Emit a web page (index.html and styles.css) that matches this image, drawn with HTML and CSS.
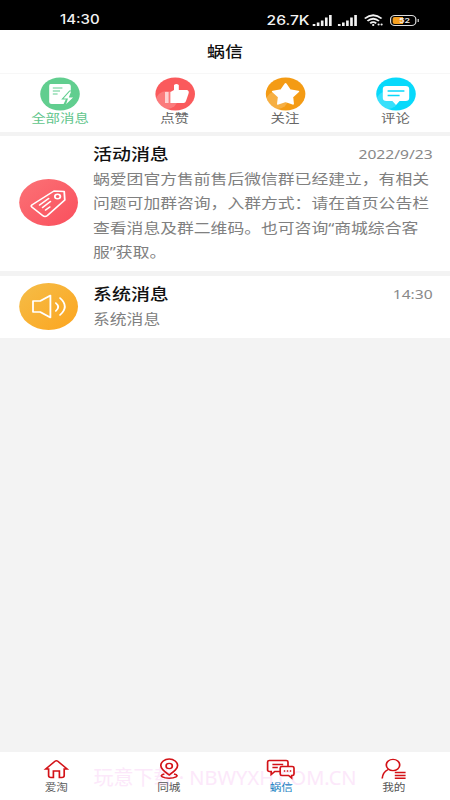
FILE: index.html
```html
<!DOCTYPE html>
<html lang="zh-CN">
<head>
<meta charset="utf-8">
<title>蜗信</title>
<link rel="stylesheet" href="styles.css">
</head>
<body>
<div class="screen">
  <header class="status">
    <span class="clock">14:30</span>
    <div class="indicators">
      <span>26.7K</span>
      <svg class="signal" viewBox="0 0 17 12"><path d="M1.2 10v2M4.6 8.5V12M8 6.5V12M11.4 3.5V12M14.8 1V12"/></svg>
      <svg class="signal" viewBox="0 0 17 12"><path d="M1.2 10v2M4.6 8.5V12M8 6.5V12M11.4 3.5V12M14.8 1V12"/></svg>
      <svg class="wifi" viewBox="0 0 17 12"><path d="M1 4.5Q8-2 15 4.5M3.2 7Q8 2.5 12.8 7M5.5 9.3Q8 7 10.5 9.3"/><circle cx="8" cy="11" r="1"/><circle cx="12.5" cy="10.5" r=".9"/><circle cx="15" cy="10.5" r=".9"/></svg>
      <div class="battery"><span>52</span></div>
    </div>
  </header>
  <h1 class="title">蜗信</h1>
  <nav class="filters">
    <a class="filter active">
      <svg viewBox="0 0 34 34"><circle cx="17" cy="17" r="16.5" fill="#61ce8f"/><path d="M9 7h15q2 0 2 2v6l-7 7h3l-2 5H10q-2 0-2-2V9q0-2 1-2z" fill="#fff"/><path d="M11 11h8M11 14h6M11 17h4" stroke="#61ce8f" stroke-width="1"/><path d="M25 14l-6 8h4l-2 7 8-9h-4l2-6z" fill="#fff" stroke="#61ce8f" stroke-width="1"/></svg>
      <span>全部消息</span>
    </a>
    <a class="filter">
      <svg viewBox="0 0 34 34"><circle cx="17" cy="17" r="16.5" fill="#fa5a5c"/><circle cx="10" cy="23" r="9" fill="#fff" opacity=".2"/><path d="M8.5 15h3v11h-3z" fill="#fff" opacity=".65"/><path d="M13 15l3-2V8q2-2 4 0v5h7q2 1 1 4l-2 7q-.5 2-2 2H13z" fill="#fff"/></svg>
      <span>点赞</span>
    </a>
    <a class="filter">
      <svg viewBox="0 0 34 34"><circle cx="17" cy="17" r="16.5" fill="#f49b14"/><circle cx="10" cy="23" r="9" fill="#fff" opacity=".2"/><path d="M17 7l3.4 6 7.1 1.5-5 5.3.6 7-6.1-2.7-6.3 2.7.7-7-5-5.3 7.1-1.5z" fill="#fff" stroke="#fff" stroke-width="1.7" stroke-linejoin="round"/></svg>
      <span>关注</span>
    </a>
    <a class="filter">
      <svg viewBox="0 0 34 34"><circle cx="17" cy="17" r="16.5" fill="#08d9fb"/><circle cx="10" cy="23" r="9" fill="#fff" opacity=".2"/><path d="M9 9h16q3 0 3 3v9q0 3-3 3h-5l-3 4-3-4H9q-3 0-3-3v-9q0-3 3-3z" fill="#fff"/><path d="M10 14h14M10 18.5h10" stroke="#08d9fb" stroke-width="1.6"/></svg>
      <span>评论</span>
    </a>
  </nav>
  <main class="messages">
    <article class="message notice">
      <svg class="avatar" viewBox="0 0 49 47"><defs><linearGradient id="red" x2="1" y2="1"><stop stop-color="#fb7276"/><stop offset="1" stop-color="#fa4f5d"/></linearGradient></defs><ellipse cx="24.5" cy="23.5" rx="24.5" ry="23.5" fill="url(#red)"/><g fill="none" stroke="#fff" stroke-width="1.5" stroke-linejoin="round" stroke-linecap="round"><path d="M10.500 26L29 12l8.500.5L38 21 23.500 36.500q-2 2-4 0L10.500 28q-1-1 0-2z"/><circle cx="32" cy="17.500" r="2.300"/><path d="M17 26l7.500-6.500M19.500 28.500l6.500-6M22 31l3.500-3"/></g></svg>
      <div class="content">
        <div class="heading"><h2>活动消息</h2><time>2022/9/23</time></div>
        <p>蜗爱团官方售前售后微信群已经建立，有相关<br>问题可加群咨询，入群方式：请在首页公告栏<br>查看消息及群二维码。也可咨询“商城综合客<br>服”获取。</p>
      </div>
    </article>
    <article class="message system">
      <svg class="avatar" viewBox="0 0 49 47"><defs><linearGradient id="gold" x2="1" y2="1"><stop stop-color="#f5bd48"/><stop offset="1" stop-color="#fca51f"/></linearGradient></defs><ellipse cx="24.5" cy="23.5" rx="24.5" ry="23.5" fill="url(#gold)"/><g fill="none" stroke="#fff" stroke-width="1.5" stroke-linejoin="round" stroke-linecap="round"><path d="M11.500 18h6L26 12.500v22L17.500 29h-6zM30.500 20q4 4 0 8M34 15q8 8.500 0 17"/></g></svg>
      <div class="content">
        <div class="heading"><h2>系统消息</h2><time>14:30</time></div>
        <p>系统消息</p>
      </div>
    </article>
  </main>
  <footer class="tabs">
    <div class="watermark">玩意下载 · NBWYXH.COM.CN</div>
    <a class="tab"><svg viewBox="0 0 22 22"><path d="M4.500 12H2L9.800 4.300q1.200-1 2.400 0L20 12h-2.500v6.500q0 2-2 2h-2v-6.500h-5v6.500h-2q-2 0-2-2z"/></svg><span>爱淘</span></a>
    <a class="tab"><svg viewBox="0 0 22 22"><path d="M11 18C7 14.500 4 12 4 8.500a7 6.500 0 0 1 14 0c0 3.500-3 6-7 9.500zM7 17c-6 2 0 4.200 4 4.200s10-2.200 4-4.200"/><circle cx="11" cy="9" r="2.600"/></svg><span>同城</span></a>
    <a class="tab current"><svg viewBox="0 0 22 22"><path d="M10.500 14.500H6l-3 3v-3H1.500q-1.500 0-1.500-1.500v-8Q0 3.500 1.500 3.500h14Q17 3.500 17 5v4.500M4 7.500h9M4 10.500h4.500M12 9.500h8.500Q22 9.500 22 11v6q0 1.500-1.500 1.500H20V21l-2.500-2.500H12q-1.500 0-1.500-1.500v-6Q10.500 9.500 12 9.500z"/><path class="dots" d="M13.500 14h1.200M16 14h1.200M18.500 14h1.200"/></svg><span>蜗信</span></a>
    <a class="tab"><svg viewBox="0 0 22 22"><circle cx="10.500" cy="8" r="5.600"/><path d="M6.500 12.500Q2 15 1.500 21.500M12 15.500h9M12 18.500h9M12 21.300h9"/></svg><span>我的</span></a>
  </footer>
</div>
</body>
</html>
```

FILE: styles.css
```css
* { box-sizing: border-box; margin: 0; padding: 0; }
html, body { width: 450px; height: 800px; overflow: hidden; }
body { font-family: "Noto Sans", "Noto Sans CJK SC", sans-serif; }
svg { display: block; overflow: visible; }

/* 375-unit wide layout stretched to the window width */
.screen {
  width: 375px;
  height: 800px;
  display: flex;
  flex-direction: column;
  background: #f3f3f3;
  transform: scaleX(1.2);
  transform-origin: 0 0;
}

.status {
  height: 30px;
  flex: none;
  padding: 10px 28px 0 50px;
  display: flex;
  justify-content: space-between;
  background: #000;
  color: #f3f3f3;
  font: 500 13px/20px Inter, sans-serif;
}
.clock { font-size: 12.500px; }
.indicators { display: flex; align-items: center; height: 20px; }
.signal { width: 18px; height: 12px; margin-left: 2px; fill: none; stroke: #f3f3f3; stroke-width: 2.200; }
.signal + .signal { margin-left: 3px; }
.wifi { width: 17px; height: 12px; margin-left: 4px; fill: none; stroke: #f3f3f3; stroke-width: 1.700; }
.wifi circle { fill: #f3f3f3; stroke: none; }
.battery {
  position: relative;
  width: 22px;
  height: 11px;
  margin-left: 5px;
  border: 1px solid #ddd;
  border-radius: 4px;
  background: linear-gradient(90deg, #f5a020 50%, #000 50%) content-box;
  padding: 1px;
  font: 500 8px/7px Roboto, sans-serif;
  text-align: center;
}
.battery span { display: block; padding-left: 2px; }
.battery::after { content: ""; position: absolute; right: -3px; top: 3px; width: 1px; height: 3px; background: #ddd; }

.title {
  height: 43px;
  flex: none;
  background: #fff;
  color: #111;
  text-align: center;
  font: 500 15px/42px "Noto Sans CJK SC", sans-serif;
}

.filters {
  height: 59px;
  flex: none;
  display: grid;
  grid-template-columns: 100px 91px 93px 91px;
  background: #fff;
  border-top: 1px solid #f7f7f7;
  padding-top: 3px;
}
.filter { display: flex; flex-direction: column; align-items: center; color: #666; font-size: 12px; line-height: 16px; }
.filter svg { width: 34px; height: 34px; }
.filter.active { color: #61c58c; }

.message { display: flex; background: #fff; padding-left: 15.500px; }
.notice { margin-top: 4px; height: 135px; }
.system { margin-top: 5px; height: 62px; }
.avatar { width: 49px; height: 47px; flex: none; }
.notice .avatar { margin-top: 43px; }
.system .avatar { margin-top: 7px; }
.content { flex: 1; margin-left: 13px; padding-right: 14.500px; }
.heading { display: flex; justify-content: space-between; height: 24px; margin-top: 6px; align-items: center; }
.heading h2 { font: 500 15.800px/24px "Noto Sans CJK SC", sans-serif; color: #111; }
.heading time { font-size: 13px; color: #888; }
.content p { font-size: 14px; line-height: 24.300px; color: #808080; white-space: nowrap; margin-top: 1px; }

.tabs {
  position: relative;
  z-index: 0;
  margin-top: auto;
  height: 48px;
  flex: none;
  display: grid;
  grid-template-columns: repeat(4, 1fr);
  background: #fff;
}
.tab { display: flex; flex-direction: column; align-items: center; padding-top: 5px; color: #555; font-size: 9.700px; line-height: 14px; }
.tab svg { width: 22px; height: 22px; fill: none; stroke: #d31217; stroke-width: 1.400; }
.tab .dots { stroke-width: 1.500; }
.tab.current { color: #1680c2; }
.tab span { margin-top: 2px; }
.watermark {
  position: absolute;
  z-index: -1;
  left: 78px;
  top: 14px;
  font-size: 20px;
  line-height: 24px;
  color: #fce8fa;
  white-space: nowrap;
  transform: scaleX(.833);
  transform-origin: 0 0;
}
```
